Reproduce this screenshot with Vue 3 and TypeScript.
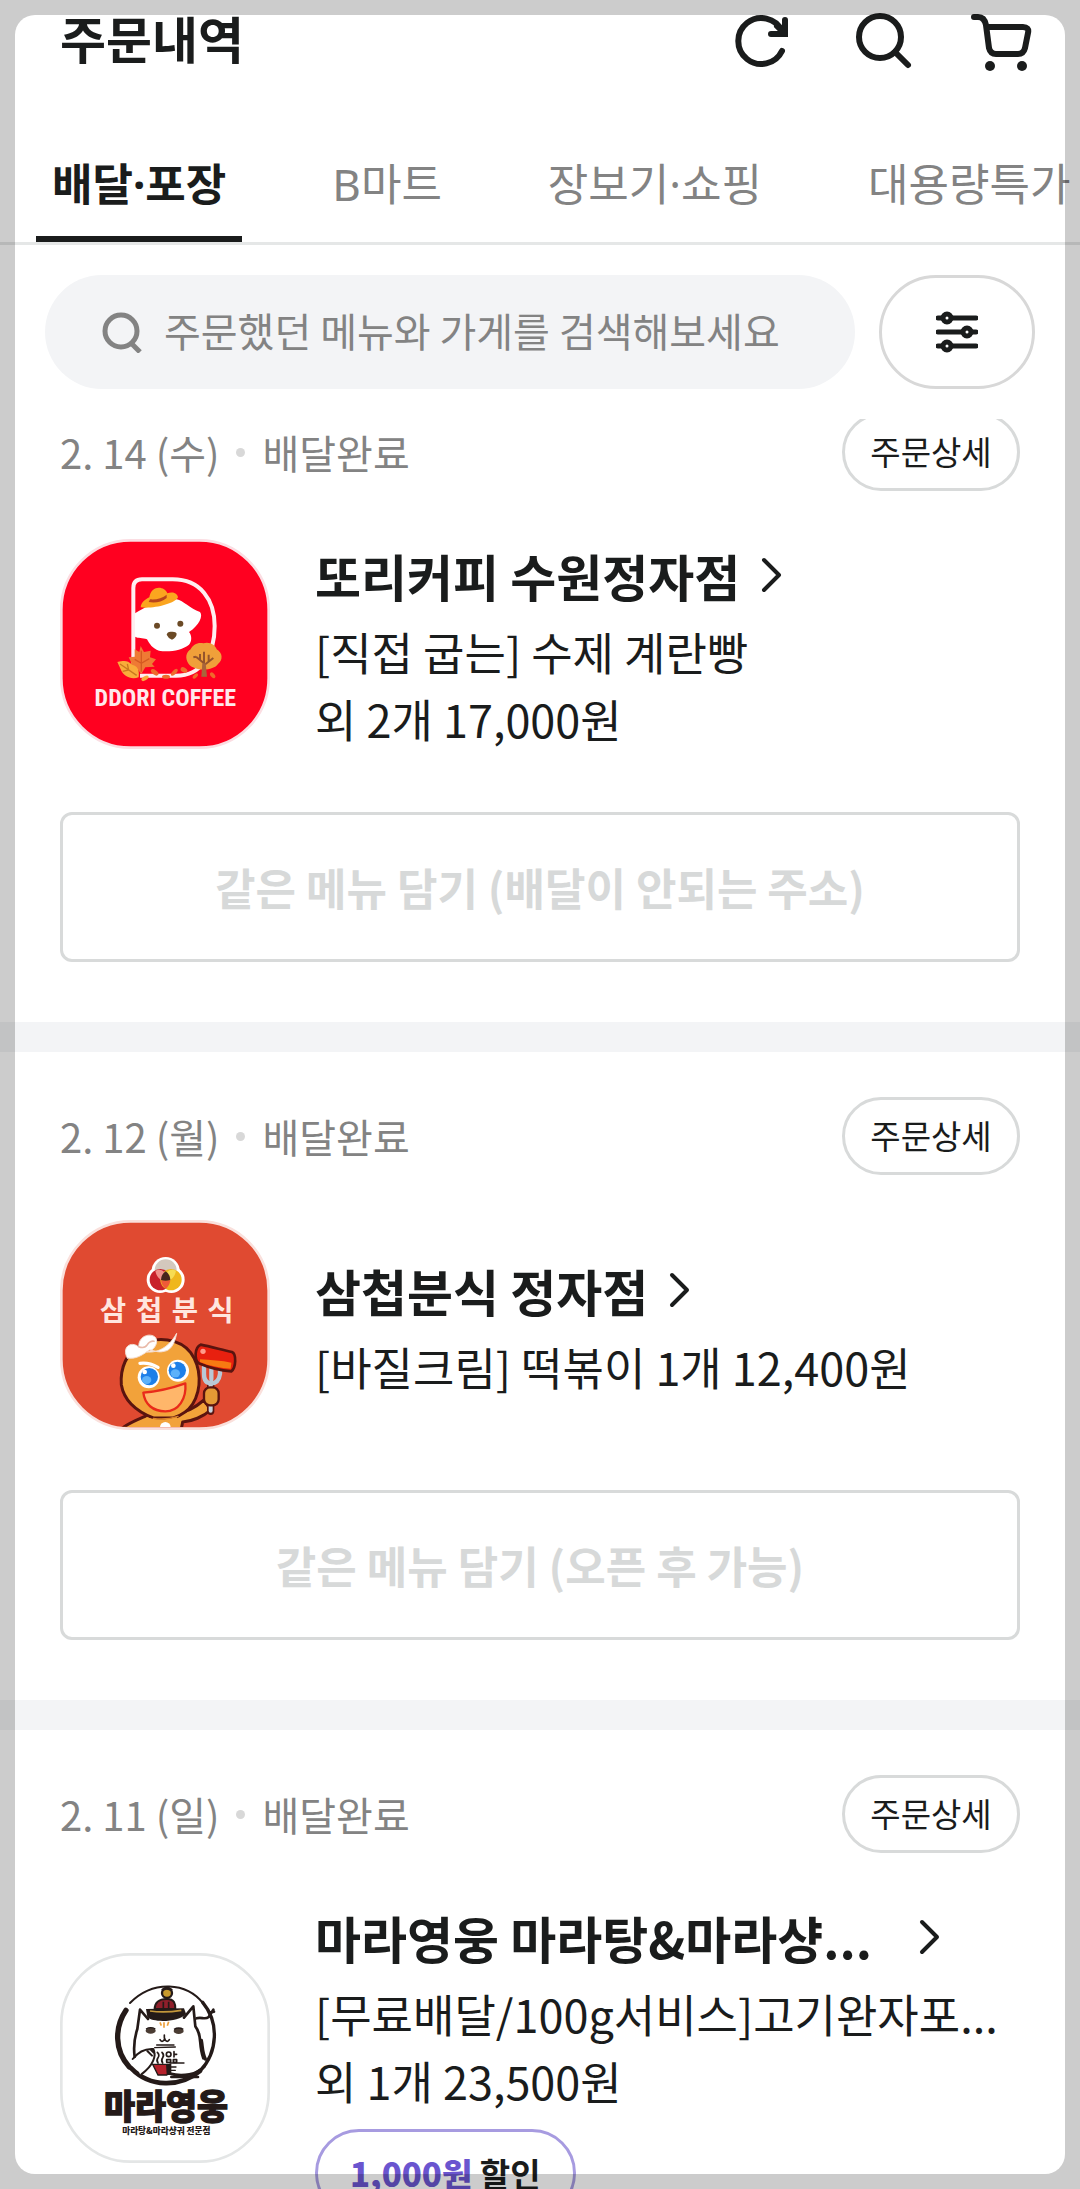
<script setup lang="ts">
import { ref } from 'vue'

interface Order {
  id: string
  date: string
  status: string
  logo: 'ddori' | 'samcheop' | 'mara'
  store: string
  lines: string[]
  coupon?: string
  reorder?: string
}

const tabs: string[] = ['배달·포장', 'B마트', '장보기·쇼핑', '대용량특가']
const activeTab = ref<string>(tabs[0])
const keyword = ref<string>('')

const orders: Order[] = [
  {
    id: 'o-0214',
    date: '2. 14 (수)',
    status: '배달완료',
    logo: 'ddori',
    store: '또리커피 수원정자점',
    lines: ['[직접 굽는] 수제 계란빵', '외 2개 17,000원'],
    reorder: '같은 메뉴 담기 (배달이 안되는 주소)',
  },
  {
    id: 'o-0212',
    date: '2. 12 (월)',
    status: '배달완료',
    logo: 'samcheop',
    store: '삼첩분식 정자점',
    lines: ['[바질크림] 떡볶이 1개 12,400원'],
    reorder: '같은 메뉴 담기 (오픈 후 가능)',
  },
  {
    id: 'o-0211',
    date: '2. 11 (일)',
    status: '배달완료',
    logo: 'mara',
    store: '마라영웅 마라탕&마라샹...',
    lines: ['[무료배달/100g서비스]고기완자포...', '외 1개 23,500원'],
    coupon: '1,000원',
  },
]
</script>

<template>
  <div class="page">
    <header class="topbar">
      <h1 class="title">주문내역</h1>
      <div class="actions">
        <button class="icon-btn" type="button" aria-label="새로고침">
          <svg viewBox="0 0 72 72" class="line-icon">
            <path d="M57 50A23 23 0 1 1 57 30" />
            <path d="M60 19V33H46" stroke-linejoin="miter" />
            <path d="M52 25L59 32" />
          </svg>
        </button>
        <button class="icon-btn" type="button" aria-label="검색">
          <svg viewBox="0 0 72 72" class="line-icon">
            <circle cx="35" cy="36" r="21" />
            <path d="M50 51L63 64" />
          </svg>
        </button>
        <button class="icon-btn" type="button" aria-label="장바구니">
          <svg viewBox="0 0 72 72" class="line-icon">
            <path d="M9 16h4c5 0 7 3 8 8l3 23c1 4 3 6 7 6h22c4 0 6-2 7-6l3-15c1-4-1-6-5-6H22" />
            <circle cx="25" cy="65" r="5" class="dot-fill" />
            <circle cx="57" cy="65" r="5" class="dot-fill" />
          </svg>
        </button>
      </div>
    </header>

    <nav class="tabs" role="tablist">
      <button
        v-for="tab in tabs"
        :key="tab"
        type="button"
        role="tab"
        class="tab"
        :class="{ active: tab === activeTab }"
        :aria-selected="tab === activeTab"
        @click="activeTab = tab"
      >{{ tab }}</button>
    </nav>

    <div class="search-row">
      <label class="search">
        <svg viewBox="0 0 42 42" class="search-icon">
          <circle cx="19" cy="20" r="16" />
          <path d="M30 33L38 41" />
        </svg>
        <input v-model="keyword" type="text" aria-label="주문 검색" placeholder="주문했던 메뉴와 가게를 검색해보세요" />
      </label>
      <button class="filter" type="button" aria-label="필터">
        <svg viewBox="0 0 42 42" class="filter-icon">
          <path d="M2 7H40M2 21H40M2 35H40" />
          <circle cx="11" cy="7" r="4" />
          <circle cx="31" cy="21" r="4" />
          <circle cx="11" cy="35" r="4" />
        </svg>
      </button>
    </div>

    <main class="viewport">
      <div class="orders">
        <article v-for="order in orders" :key="order.id" class="order">
          <div class="order-head">
            <p class="meta">
              <span>{{ order.date }}</span>
              <i class="bullet"></i>
              <span>{{ order.status }}</span>
            </p>
            <button class="detail" type="button">주문상세</button>
          </div>

          <div class="order-body">
            <svg v-if="order.logo === 'ddori'" class="logo" viewBox="60 57 630 630" role="img" aria-label="또리커피">
              <rect x="64" y="61" width="622" height="622" rx="208" fill="#ff0020" stroke="#fbdde2" stroke-width="8" />
              <path d="M280 465V204q0-26 26-26h92c84 0 126 62 126 140 0 86-40 149-116 149H300" fill="none" stroke="#ffeef0" stroke-width="12" />
              <path d="M285 280C315 262 350 240 410 238c20 4 40 28 70 38 10 12-2 40-33 60 10 12 8 30 0 38-20 16-60 24-90 18-20-6-28-20-36-34-14-6-26-2-36-8z" fill="#fff" />
              <path d="M302 262c2-16 14-24 26-30 6-38 46-34 54-12 14-6 30-2 32 12-8 20-80 36-112 30z" fill="#fba51f" />
              <path d="M330 238c18 2 38-4 50-14v10c-14 12-36 16-54 12z" fill="#b9451c" />
              <circle cx="351" cy="317" r="9" fill="#6b4a26" />
              <circle cx="421" cy="311" r="9" fill="#6b4a26" />
              <path d="M380 344q2-10 14-9 14-1 16 6 0 10-14 18-12-5-16-15z" fill="#6b4a26" />
              <path d="M302 378l10 18 20-4-2 20 18 6-12 14 8 8-28 2-12 20-14-18-24-2 8-14-8-16 18-2 0-22 14 8z" fill="#ef7a34" />
              <path d="M304 392V455M284 418l20 12 24-14" fill="none" stroke="#d55a22" stroke-width="4" />
              <path d="M232 426c20-4 30-6 44 8 20 4 22 20 20 38-22 8-46-2-54-24z" fill="#f9ac3a" />
              <path d="M240 432l50 34M262 432l4 18-18 4" fill="none" stroke="#c9781e" stroke-width="4" />
              <path d="M490 370c20-6 36 6 40 18 18 10 20 32 4 44-14 22-72 22-88 0-12-18-8-34 6-44 6-14 22-22 38-18z" fill="#f0a03a" />
              <path d="M492 470V395M492 430l-24-20M492 436l28-22M480 420v-18M506 424v-20M468 410l-8 2" fill="none" stroke="#96542c" stroke-width="6" />
              <path d="M484 470l3-40h10l4 40z" fill="#a9653b" />
              <g fill="#ee6a2c">
                <ellipse cx="344" cy="457" rx="13" ry="7" transform="rotate(35 344 457)" />
                <ellipse cx="378" cy="470" rx="12" ry="6" />
                <ellipse cx="403" cy="457" rx="13" ry="6" transform="rotate(-45 403 457)" />
                <ellipse cx="432" cy="450" rx="11" ry="7" transform="rotate(30 432 450)" />
                <ellipse cx="466" cy="468" rx="10" ry="5" transform="rotate(-45 466 468)" />
                <ellipse cx="518" cy="466" rx="10" ry="6" transform="rotate(50 518 466)" />
              </g>
              <ellipse cx="315" cy="475" rx="12" ry="6" fill="#f9ac3a" transform="rotate(-30 315 475)" />
              <text x="376" y="558" class="logo-latin" text-anchor="middle">DDORI COFFEE</text>
            </svg>

            <svg v-else-if="order.logo === 'samcheop'" class="logo" viewBox="60 60 630 630" role="img" aria-label="삼첩분식">
              <defs>
                <clipPath id="samcheop-clip"><rect x="69" y="69" width="612" height="612" rx="203" /></clipPath>
              </defs>
              <rect x="64" y="64" width="622" height="622" rx="208" fill="#e04a31" stroke="#fae0dc" stroke-width="8" />
              <g fill="#fff">
                <circle cx="377" cy="213" r="42" />
                <circle cx="360" cy="239" r="40" />
                <circle cx="394" cy="239" r="40" />
              </g>
              <circle cx="377" cy="211" r="33" fill="#d3c8bd" />
              <circle cx="361" cy="239" r="32" fill="#c8202a" />
              <circle cx="393" cy="239" r="32" fill="#efb71d" />
              <path d="M346 212q20-8 31 10l-14 18q-14-10-17-28z" fill="#f0908a" />
              <path d="M408 212q-20-8-31 10l14 18q14-10 17-28z" fill="#f7dc52" />
              <path d="M363 241h28q-2 16-14 26-12-10-14-26z" fill="#ef5a38" />
              <path d="M377 214q14 10 14 26-14 4-28 0 0-16 14-26z" fill="#47251b" />
              <text x="179 288 395 502" y="364" class="logo-sam">삼첩분식</text>
              <g clip-path="url(#samcheop-clip)" stroke-linejoin="round" stroke-linecap="round">
                <path d="M240 690c20-20 56-32 96-50h72c22-2 52-12 84-40l20 30c-22 20-56 34-84 36l-6 30z" fill="#f2a23a" stroke="#5a140f" stroke-width="9" />
                <path d="M300 436c50-30 120-20 152 22 32 44 34 108 6 154-14 22-34 34-58 42h-60c-50-20-88-52-96-100-4-50 16-96 56-118z" fill="#f2a23a" stroke="#5a140f" stroke-width="9" />
                <path d="M320 652c30 10 60 8 90-2l10 44H280z" fill="#f2a23a" stroke="none" />
                <path d="M340 655q36 6 74-6" fill="none" stroke="#d9822a" stroke-width="4" />
                <path d="M262 474c-18-32 10-52 34-34 0-34 36-42 50-28 12 14-4 42-26 44 26 2 62-6 90-56-8 40-22 52-38 54-20 6-36-6-44-4-24 18-42 28-66 24z" fill="#fff" stroke="#f4dcd0" stroke-width="3" />
                <path d="M296 440c10 4 20 4 26-6 4-8 14-12 20-10" fill="none" stroke="#e9b9a8" stroke-width="5" />
                <path d="M300 490q26-4 54 12" fill="none" stroke="#fff" stroke-width="10" />
                <circle cx="326" cy="532" r="33" fill="#fff" />
                <circle cx="414" cy="512" r="33" fill="#fff" />
                <circle cx="328" cy="530" r="26" fill="#1d7fe8" />
                <circle cx="412" cy="511" r="26" fill="#1d7fe8" />
                <ellipse cx="320" cy="540" rx="14" ry="12" fill="#5cb1fa" />
                <ellipse cx="406" cy="520" rx="14" ry="12" fill="#5cb1fa" />
                <circle cx="314" cy="516" r="7" fill="#fff" />
                <circle cx="400" cy="497" r="7" fill="#fff" />
                <path d="M310 578q64-6 126-28c4 46-20 84-60 84-38 0-62-22-66-56z" fill="#ffb66a" stroke="#e92a1a" stroke-width="7" />
                <path d="M512 634V556" stroke="#5a140f" stroke-width="22" />
                <path d="M512 632V556" stroke="#c9d3dd" stroke-width="12" />
                <path d="M492 500v22q0 28 22 28t26-28v-18M514 496v42" fill="none" stroke="#b9c8d6" stroke-width="13" />
                <path d="M482 434c30 6 66 16 94 22 14 6 12 48-2 58-30-2-70-12-98-24-14-12-12-48 6-56z" fill="#e8200f" stroke="#5a140f" stroke-width="8" />
                <path d="M480 478c30 2 66 4 94 10l-2 18c-30-2-64-8-92-20z" fill="#f77a12" />
                <circle cx="489" cy="454" r="8" fill="#ff9b8a" />
                <rect x="492" y="562" width="44" height="54" rx="18" fill="#e59a35" stroke="#5a140f" stroke-width="7" />
                <circle cx="376" cy="682" r="16" fill="#fff" />
              </g>
            </svg>

            <svg v-else class="logo" viewBox="60 68 630 630" role="img" aria-label="마라영웅">
              <rect x="64" y="72" width="622" height="622" rx="208" fill="#fff" stroke="#e4e6e6" stroke-width="8" />
              <g fill="none" stroke="#241a18" stroke-linecap="round" stroke-linejoin="round">
                <path d="M270 218C340 148 440 156 490 220" stroke-width="6" />
                <path d="M488 216c50 60 46 150-8 206" stroke-width="10" />
                <path d="M480 422c-60 50-150 50-206-8" stroke-width="14" />
                <path d="M258 240c-34 50-36 120 10 170" stroke-width="16" />
                <path d="M284 384C278 350 284 320 290 300L300 238 324 266 432 262 460 228 468 290C488 330 476 350 490 392C480 424 420 436 380 432H300z" stroke="none" fill="#fff" />
                <path d="M284 380C280 350 284 320 292 296L300 238 324 266M432 262L460 228 466 288C488 316 474 340 490 384" stroke-width="8" />
                <path d="M484 330c4 20 2 36 12 56" stroke-width="10" />
                <path d="M278 386c14-18 34-32 62-30 10 20 0 50-36 76M322 362l14 14M332 358l12 12" stroke-width="6" />
                <path d="M390 430c40 10 80 2 104-22M394 440h80" stroke-width="8" />
                <path d="M344 352l62-2M350 344h52M390 398h42M394 410h14M394 420h12" stroke-width="4" />
                <path d="M470 264c14-6 24 6 36-4l14-22M508 246l14-2" stroke-width="8" />
                <path d="M360 328c4 8 12 6 14-4 2 10 10 12 14 4M373 314v8" stroke-width="5" />
                <path d="M352 366q8 8 2 16t0 16M366 366q8 8 2 16t0 16" stroke-width="5" />
                <circle cx="386" cy="372" r="7" stroke-width="5" />
                <path d="M402 364v16M402 372h8M380 388h12v8h-12zM400 388h10v8h-10z" stroke-width="5" />
              </g>
              <g stroke="#eda03b" stroke-width="5"><path d="M360 276l4 10M372 276v16M386 274l-4 12" /></g>
              <path d="M318 236l114-2 6 16c-20 26-100 28-116 10z" fill="#241a18" />
              <path d="M330 242q44 6 94-2" fill="none" stroke="#c4973a" stroke-width="5" />
              <path d="M344 236c0-18 12-30 36-30s26 14 26 30z" fill="#8f1f2b" stroke="#241a18" stroke-width="6" />
              <path d="M370 214v20M386 214v20" stroke="#241a18" stroke-width="5" />
              <circle cx="381" cy="188" r="15" fill="#c89a2c" stroke="#241a18" stroke-width="7" />
              <path d="M366 180q14-12 30 0" stroke="#241a18" stroke-width="8" fill="none" />
              <ellipse cx="332" cy="301" rx="15" ry="9" fill="#4a3c33" />
              <ellipse cx="416" cy="302" rx="15" ry="9" fill="#4a3c33" />
              <path d="M318 296q14-8 28 0M402 297q14-8 28 0" fill="none" stroke="#241a18" stroke-width="4" />
              <path d="M338 402h54v24l-12 8h-26z" fill="#b5222c" stroke="#241a18" stroke-width="4" />
              <path d="M378 402h14v32h-12z" fill="#241a18" />
              <text x="378" y="567" class="logo-mara" text-anchor="middle">마라영웅</text>
              <text x="379" y="612" class="logo-mara-sub" text-anchor="middle">마라탕&amp;마라샹궈 전문점</text>
            </svg>

            <div class="info">
              <a href="#" class="store" :class="{ clipped: order.logo === 'mara' }">
                <strong>{{ order.store }}</strong>
                <svg viewBox="0 0 24 40" class="chevron"><path d="M5 5L20 20L5 35" /></svg>
              </a>
              <p v-for="line in order.lines" :key="line" class="line">{{ line }}</p>
              <span v-if="order.coupon" class="coupon"><b>{{ order.coupon }}</b> 할인</span>
            </div>
          </div>

          <button v-if="order.reorder" class="reorder" type="button" disabled>{{ order.reorder }}</button>
        </article>
      </div>
    </main>
  </div>
</template>

<style>
body {
  margin: 0;
  background: #fff;
}
</style>

<style scoped>
.page {
  position: relative;
  display: flex;
  flex-direction: column;
  height: 100vh;
  overflow: hidden;
  background: #fff;
  color: #1a1c1c;
  font-family: "Noto Sans CJK KR", "Noto Sans", sans-serif;
}

/* Translucent frame around the rounded inner window */
.page::after {
  content: "";
  position: absolute;
  inset: 15px;
  border-radius: 20px;
  box-shadow: 0 0 0 40px rgba(0, 0, 0, 0.2);
  pointer-events: none;
}

button {
  margin: 0;
  padding: 0;
  border: 0;
  background: none;
  color: inherit;
  font-family: inherit;
}

p,
h1 {
  margin: 0;
}

svg {
  display: block;
  flex: none;
}

.topbar {
  display: flex;
  flex: none;
  align-items: center;
  justify-content: space-between;
  padding: 0 43px 51px 60px;
}

.title {
  font-size: 50px;
  font-weight: 700;
  line-height: 74px;
}

.actions {
  display: flex;
  gap: 48px;
}

.icon-btn,
.icon-btn svg {
  width: 72px;
  height: 72px;
}

.line-icon {
  fill: none;
  stroke: #1a1c1c;
  stroke-width: 6;
  stroke-linecap: round;
  stroke-linejoin: round;
}

.dot-fill {
  fill: #1a1c1c;
  stroke: none;
}

.tabs {
  display: flex;
  flex: none;
  gap: 74px;
  padding-left: 36px;
  border-bottom: 3px solid #e5e7e7;
  overflow: hidden;
}

/* Noto Sans leads here for its narrow middle dot */
.tab {
  flex: none;
  height: 117px;
  padding: 0 16px;
  color: #838383;
  font-family: "Noto Sans", "Noto Sans CJK KR", sans-serif;
  font-size: 44px;
  line-height: 66px;
  white-space: nowrap;
}

.tab.active {
  box-shadow: inset 0 -6px #1a1c1c;
  color: #1a1c1c;
  font-weight: 700;
}

.search-row {
  display: flex;
  flex: none;
  gap: 24px;
  padding: 30px 45px;
}

.search {
  display: flex;
  flex: 1;
  align-items: center;
  gap: 20px;
  height: 114px;
  padding: 0 57px;
  border-radius: 57px;
  background: #f3f4f6;
  box-sizing: border-box;
}

.search-icon,
.filter-icon {
  width: 42px;
  height: 42px;
  fill: none;
  stroke: #838383;
  stroke-width: 5;
}

.search input {
  flex: 1;
  min-width: 0;
  padding: 0 0 4px;
  border: 0;
  outline: 0;
  background: none;
  color: #1a1c1c;
  font-family: inherit;
  font-size: 40px;
  line-height: 60px;
}

.search input::placeholder {
  color: #838383;
  opacity: 1;
}

.filter {
  display: flex;
  flex: none;
  align-items: center;
  justify-content: center;
  width: 156px;
  height: 114px;
  border: 3px solid #d8d8d8;
  border-radius: 57px;
}

.filter-icon {
  stroke: #1a1c1c;
  stroke-linecap: round;
}

.filter-icon circle {
  fill: #fff;
}

.viewport {
  flex: 1;
  min-height: 0;
  overflow: hidden;
}

/* The list is resting partly scrolled under the search bar */
.orders {
  margin-top: -51px;
}

.order {
  padding: 45px 60px 60px;
}

.order + .order {
  border-top: 30px solid #f3f4f6;
}

.order-head {
  display: flex;
  align-items: center;
  justify-content: space-between;
  margin-bottom: 45px;
}

.meta {
  display: flex;
  align-items: center;
  gap: 17px;
  color: #838383;
  font-size: 40px;
  line-height: 60px;
}

.bullet {
  width: 9px;
  height: 9px;
  border-radius: 50%;
  background: #d8d8d8;
}

.detail {
  width: 178px;
  height: 78px;
  padding-bottom: 2px;
  border: 3px solid #d8dada;
  border-radius: 39px;
  font-size: 33px;
  line-height: 48px;
}

.order-body {
  display: flex;
  align-items: center;
  gap: 45px;
}

.logo {
  width: 210px;
  height: 210px;
}

.info {
  display: flex;
  flex: 1;
  flex-direction: column;
  align-items: flex-start;
  min-width: 0;
}

.store {
  display: flex;
  align-items: center;
  gap: 19px;
  margin-bottom: 4px;
  color: inherit;
  font-size: 50px;
  line-height: 78px;
  text-decoration: none;
  white-space: nowrap;
}

.store.clipped strong {
  width: 583px;
}

.store strong {
  font-weight: 700;
}

.chevron {
  width: 24px;
  height: 40px;
  fill: none;
  stroke: #1a1c1c;
  stroke-width: 4;
  stroke-linecap: round;
  stroke-linejoin: round;
}

.line {
  font-size: 45px;
  line-height: 67px;
  white-space: nowrap;
}

.coupon {
  height: 88px;
  margin-top: 15px;
  padding: 0 32px;
  border: 3px solid #a79be0;
  border-radius: 44px;
  box-sizing: border-box;
  font-size: 33px;
  font-weight: 700;
  line-height: 82px;
}

.coupon b {
  color: #6a55cf;
}

.reorder {
  width: 100%;
  height: 150px;
  margin-top: 60px;
  border: 3px solid #d8dada;
  border-radius: 12px;
  color: #d7d9d9;
  font-size: 44px;
  font-weight: 700;
  line-height: 66px;
}

.logo-latin {
  fill: #ffe9ec;
  font-family: "Liberation Sans Narrow", "Roboto Condensed", "Liberation Sans", sans-serif;
  font-size: 72px;
  font-weight: 700;
}

.logo-sam {
  fill: #ffe6df;
  font-size: 86px;
  font-weight: 700;
}

.logo-mara {
  fill: #241a18;
  stroke: #241a18;
  stroke-width: 4;
  font-size: 101px;
  font-weight: 900;
}

.logo-mara-sub {
  fill: #241a18;
  font-size: 26px;
  font-weight: 900;
}
</style>
